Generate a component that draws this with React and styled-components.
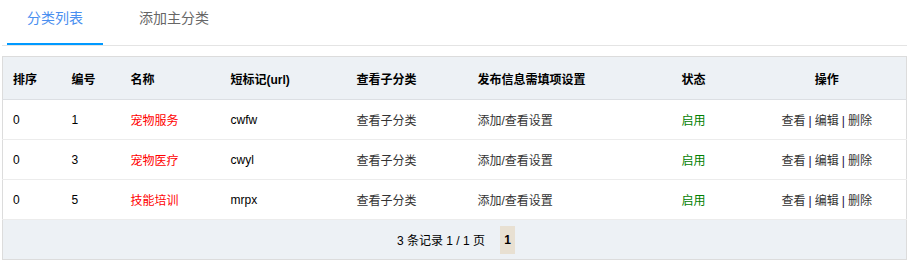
import React from "react";
import styled, { createGlobalStyle } from "styled-components";

const GlobalStyle = createGlobalStyle`
  body {
    margin: 0;
    background: #fff;
    font-family: "Liberation Sans", "Noto Sans CJK SC", sans-serif;
  }
`;

const Page = styled.div`
  padding: 0 3px 0 2px;
`;

const TabBar = styled.div`
  display: flex;
  padding-left: 5px;
  border-bottom: 1px solid #e4e4e4;
  height: 45px;
`;

const Tab = styled.div`
  padding: 0 20px;
  margin-right: 16px;
  height: 43px;
  line-height: 37px;
  font-size: 14px;
  color: ${(p) => (p.active ? "#4a8ff0" : "#666")};
  border-bottom: 2px solid ${(p) => (p.active ? "#0099ff" : "transparent")};
  cursor: pointer;
`;

const Table = styled.table`
  width: 100%;
  margin-top: 10px;
  border-collapse: collapse;
  border: 1px solid #dcdcdc;
  font-size: 12px;
  table-layout: fixed;
`;

const Th = styled.th`
  height: 42px;
  padding: ${(p) => (p.center ? "0" : "0 0 0 10px")};
  background: #edf1f5;
  border-bottom: 1px solid #dcdfe3;
  font-weight: bold;
  color: #000;
  text-align: ${(p) => (p.center ? "center" : "left")};
`;

const Td = styled.td`
  height: 39px;
  padding: ${(p) => (p.center ? "0" : "0 0 0 10px")};
  border-bottom: 1px solid #ececec;
  color: ${(p) => p.color || "#000"};
  text-align: ${(p) => (p.center ? "center" : "left")};
`;

const Link = styled.span`
  color: #333;
  cursor: pointer;
`;

const Sep = styled.span`
  color: #1a0a3a;
  margin: 0 3px;
`;

const FooterCell = styled.td`
  height: 39px;
  background: #edf1f5;
  text-align: center;
  padding: 0;
`;

const Pager = styled.div`
  display: inline-flex;
  align-items: center;
  gap: 15px;
  color: #000;
  padding-left: 3px;
`;

const PageNum = styled.span`
  display: inline-block;
  width: 15px;
  height: 28px;
  line-height: 28px;
  background: #e8e0d2;
  font-weight: bold;
  text-align: center;
`;

const rows = [
  { sort: 0, id: 1, name: "宠物服务", url: "cwfw" },
  { sort: 0, id: 3, name: "宠物医疗", url: "cwyl" },
  { sort: 0, id: 5, name: "技能培训", url: "mrpx" },
];

const widths = [59, 59, 100, 126, 121, 204, 76, null];

export default function App() {
  return (
    <Page>
      <GlobalStyle />
      <TabBar>
        <Tab active>分类列表</Tab>
        <Tab>添加主分类</Tab>
      </TabBar>
      <Table>
        <colgroup>
          {widths.map((w, i) => (
            <col key={i} style={w ? { width: w } : undefined} />
          ))}
        </colgroup>
        <thead>
          <tr>
            <Th>排序</Th>
            <Th>编号</Th>
            <Th>名称</Th>
            <Th>短标记(url)</Th>
            <Th>查看子分类</Th>
            <Th>发布信息需填项设置</Th>
            <Th>状态</Th>
            <Th center>操作</Th>
          </tr>
        </thead>
        <tbody>
          {rows.map((r) => (
            <tr key={r.id}>
              <Td>{r.sort}</Td>
              <Td>{r.id}</Td>
              <Td color="#ff0000">{r.name}</Td>
              <Td>{r.url}</Td>
              <Td color="#333">查看子分类</Td>
              <Td color="#333">添加/查看设置</Td>
              <Td color="#008000">启用</Td>
              <Td center>
                <Link>查看</Link>
                <Sep>|</Sep>
                <Link>编辑</Link>
                <Sep>|</Sep>
                <Link>删除</Link>
              </Td>
            </tr>
          ))}
        </tbody>
        <tfoot>
          <tr>
            <FooterCell colSpan={8}>
              <Pager>
                <span>3 条记录 1 / 1 页</span>
                <PageNum>1</PageNum>
              </Pager>
            </FooterCell>
          </tr>
        </tfoot>
      </Table>
    </Page>
  );
}
